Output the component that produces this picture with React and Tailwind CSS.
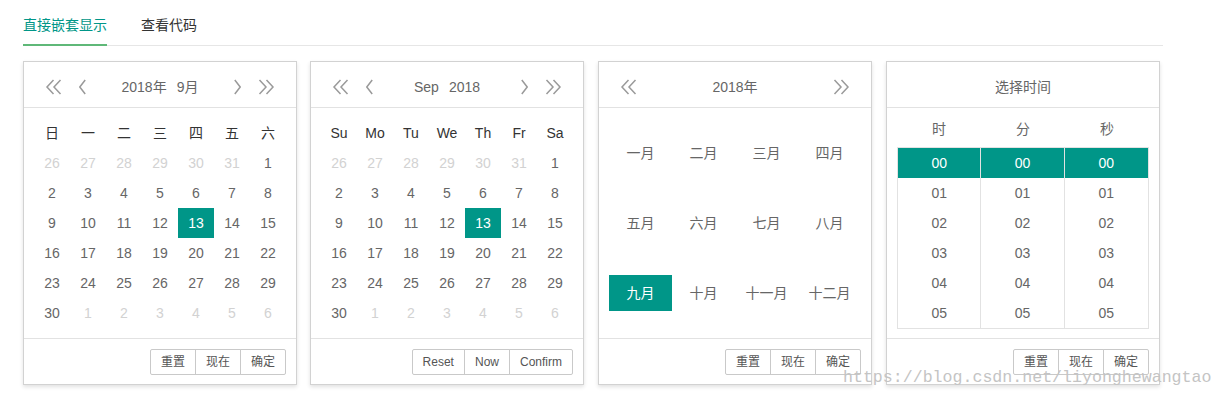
import React from "react";

const FONT = { fontFamily: '"Liberation Sans", Arial, "Noto Sans CJK SC", sans-serif' };

function DblLeft() {
  return (
    <svg width="17" height="16" viewBox="0 0 17 16" fill="none" stroke="#9a9a9a" strokeWidth="1.5" strokeLinejoin="miter">
      <path d="M8.5 1 L2 8 L8.5 15" />
      <path d="M15.5 1 L9 8 L15.5 15" />
    </svg>
  );
}
function DblRight() {
  return (
    <svg width="17" height="16" viewBox="0 0 17 16" fill="none" stroke="#9a9a9a" strokeWidth="1.5">
      <path d="M1.5 1 L8 8 L1.5 15" />
      <path d="M8.5 1 L15 8 L8.5 15" />
    </svg>
  );
}
function SglLeft() {
  return (
    <svg width="7" height="16" viewBox="0 0 7 16" fill="none" stroke="#9a9a9a" strokeWidth="1.5">
      <path d="M6.2 1 L0.8 8 L6.2 15" />
    </svg>
  );
}
function SglRight() {
  return (
    <svg width="7" height="16" viewBox="0 0 7 16" fill="none" stroke="#9a9a9a" strokeWidth="1.5">
      <path d="M0.8 1 L6.2 8 L0.8 15" />
    </svg>
  );
}

function Panel({ children, className = "" }) {
  return (
    <div className={"w-[274px] shrink-0 border border-[#d2d2d2] bg-white text-[#666] text-[14px] shadow-[0_2px_4px_rgba(0,0,0,0.12)] " + className}>
      {children}
    </div>
  );
}

function Header({ children, single = true, arrows = true }) {
  return (
    <div className="h-[46px] pt-[10px] pb-[5px] border-b border-[#e2e2e2] flex items-center">
      {arrows ? (
        <div className="w-[86px] pl-[21px] flex items-center shrink-0">
          <DblLeft />
          {single && (
            <span className="ml-[17px] flex">
              <SglLeft />
            </span>
          )}
        </div>
      ) : (
        <div className="w-[86px] shrink-0" />
      )}
      <div className="flex-1 flex justify-center items-center leading-[30px] gap-[10px]">{children}</div>
      {arrows ? (
        <div className="w-[86px] pr-[21px] flex items-center justify-end shrink-0">
          {single && (
            <span className="mr-[17px] flex">
              <SglRight />
            </span>
          )}
          <DblRight />
        </div>
      ) : (
        <div className="w-[86px] shrink-0" />
      )}
    </div>
  );
}

function Footer({ labels }) {
  return (
    <div className="h-[46px] border-t border-[#e2e2e2] flex justify-end items-start pt-[10px] pr-[10px]">
      {labels.map((l, i) => (
        <span
          key={l}
          className={
            "h-[26px] leading-[24px] px-[10px] border border-[#c9c9c9] text-[12px] text-[#555] bg-white " +
            (i === 0 ? "rounded-l-[2px]" : "-ml-px") +
            (i === labels.length - 1 ? " rounded-r-[2px]" : "")
          }
        >
          {l}
        </span>
      ))}
    </div>
  );
}

const weeks = [
  [[26, 1], [27, 1], [28, 1], [29, 1], [30, 1], [31, 1], [1, 0]],
  [[2, 0], [3, 0], [4, 0], [5, 0], [6, 0], [7, 0], [8, 0]],
  [[9, 0], [10, 0], [11, 0], [12, 0], [13, 2], [14, 0], [15, 0]],
  [[16, 0], [17, 0], [18, 0], [19, 0], [20, 0], [21, 0], [22, 0]],
  [[23, 0], [24, 0], [25, 0], [26, 0], [27, 0], [28, 0], [29, 0]],
  [[30, 0], [1, 1], [2, 1], [3, 1], [4, 1], [5, 1], [6, 1]],
];

function DayGrid({ heads }) {
  return (
    <div className="p-[10px]">
      <div className="grid grid-cols-7">
        {heads.map((h) => (
          <div key={h} className="h-[30px] w-[36px] flex items-center justify-center text-[#333]">
            {h}
          </div>
        ))}
        {weeks.flat().map(([d, t], i) => (
          <div
            key={i}
            className={
              "h-[30px] w-[36px] flex items-center justify-center " +
              (t === 1 ? "text-[#d2d2d2]" : t === 2 ? "bg-[#009688] text-white" : "text-[#666]")
            }
          >
            {d}
          </div>
        ))}
      </div>
    </div>
  );
}

const months = ["一月", "二月", "三月", "四月", "五月", "六月", "七月", "八月", "九月", "十月", "十一月", "十二月"];

function MonthGrid() {
  return (
    <div className="p-[10px]">
      <div className="grid grid-cols-4">
        {months.map((m) => (
          <div key={m} className="h-[70px] flex items-center">
            <div
              className={
                "w-full h-[36px] flex items-center justify-center " +
                (m === "九月" ? "bg-[#009688] text-white" : "text-[#666]")
              }
            >
              {m}
            </div>
          </div>
        ))}
      </div>
    </div>
  );
}

function TimeGrid() {
  const rows = ["00", "01", "02", "03", "04", "05"];
  return (
    <div className="pt-[10px] px-[10px] pb-[9px]">
      <div className="grid grid-cols-3 h-[29px] pb-[6px] items-center text-center text-[#666]">
        <span>时</span>
        <span>分</span>
        <span>秒</span>
      </div>
      <div className="grid grid-cols-3 border border-[#e2e2e2] divide-x divide-[#e2e2e2]">
        {[0, 1, 2].map((c) => (
          <div key={c}>
            {rows.map((r) => (
              <div
                key={r}
                className={
                  "h-[30px] flex items-center justify-center " +
                  (r === "00" ? "bg-[#009688] text-white" : "text-[#666]")
                }
              >
                {r}
              </div>
            ))}
          </div>
        ))}
      </div>
    </div>
  );
}

export default function App() {
  return (
    <div className="relative w-[1226px] h-[398px] bg-white overflow-hidden" style={FONT}>
      <div className="ml-[23px] w-[1140px] pt-[5px]">
        <div className="flex gap-[34px] h-[41px] border-b border-[#e6e6e6] text-[14px]">
          <div className="relative leading-[40px] text-[#009688]">
            直接嵌套显示
            <div className="absolute left-0 right-0 -bottom-px h-[2px] bg-[#5fb878]" />
          </div>
          <div className="leading-[40px] text-[#333]">查看代码</div>
        </div>
      </div>
      <div className="mt-[15px] ml-[23px] flex">
        <Panel>
          <Header>
            <span>2018年</span>
            <span>9月</span>
          </Header>
          <DayGrid heads={["日", "一", "二", "三", "四", "五", "六"]} />
          <Footer labels={["重置", "现在", "确定"]} />
        </Panel>
        <Panel className="ml-[13px]">
          <Header>
            <span>Sep</span>
            <span>2018</span>
          </Header>
          <DayGrid heads={["Su", "Mo", "Tu", "We", "Th", "Fr", "Sa"]} />
          <Footer labels={["Reset", "Now", "Confirm"]} />
        </Panel>
        <Panel className="ml-[14px]">
          <Header single={false}>
            <span>2018年</span>
          </Header>
          <MonthGrid />
          <Footer labels={["重置", "现在", "确定"]} />
        </Panel>
        <Panel className="ml-[14px]">
          <Header arrows={false}>
            <span>选择时间</span>
          </Header>
          <TimeGrid />
          <Footer labels={["重置", "现在", "确定"]} />
        </Panel>
      </div>
      <div
        className="absolute left-[843px] top-[368px] text-[16.6px] leading-[20px] text-[#c4c4c4] whitespace-nowrap pointer-events-none"
        style={{ fontFamily: '"Liberation Mono", "Courier New", monospace' }}
      >
        https://blog.csdn.net/liyonghewangtao
      </div>
    </div>
  );
}
